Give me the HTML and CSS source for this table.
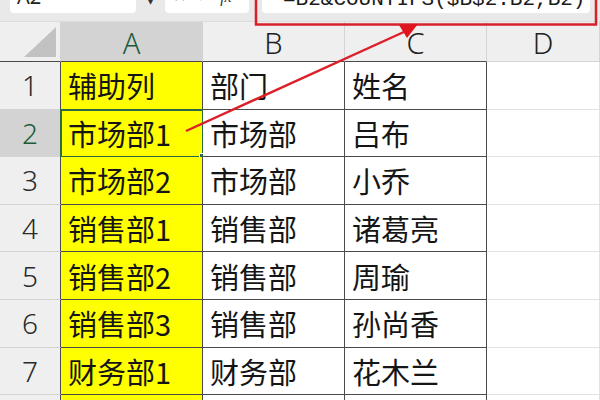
FILE: index.html
```html
<!DOCTYPE html>
<html>
<head>
<meta charset="utf-8">
<link rel="stylesheet" href="styles.css">
</head>
<body>
<div class="page">
  <div class="topbar">
    <div class="namebox"><span class="nb-text">A2</span></div>
    <div class="drop">▾</div>
    <div class="fxbox"><span class="fx-text">✕&nbsp;&nbsp;✓&nbsp;&nbsp;<i>fx</i></span></div>
    <div class="formula"><span class="f-text">=B2&amp;COUNTIFS($B$2:B2,B2)</span></div>
  </div>
  <div class="sheet">
    <div class="corner"><div class="tri"></div></div>
    <div class="colh sel">A</div>
    <div class="colh">B</div>
    <div class="colh">C</div>
    <div class="colh last">D</div>

    <div class="rowh">1</div>
    <div class="cell a">辅助列</div><div class="cell">部门</div><div class="cell">姓名</div><div class="cell d"></div>

    <div class="rowh sel">2</div>
    <div class="cell a active">市场部1<span class="handle"></span></div><div class="cell">市场部</div><div class="cell">吕布</div><div class="cell d"></div>

    <div class="rowh">3</div>
    <div class="cell a">市场部2</div><div class="cell">市场部</div><div class="cell">小乔</div><div class="cell d"></div>

    <div class="rowh">4</div>
    <div class="cell a">销售部1</div><div class="cell">销售部</div><div class="cell">诸葛亮</div><div class="cell d"></div>

    <div class="rowh">5</div>
    <div class="cell a">销售部2</div><div class="cell">销售部</div><div class="cell">周瑜</div><div class="cell d"></div>

    <div class="rowh">6</div>
    <div class="cell a">销售部3</div><div class="cell">销售部</div><div class="cell">孙尚香</div><div class="cell d"></div>

    <div class="rowh">7</div>
    <div class="cell a">财务部1</div><div class="cell">财务部</div><div class="cell">花木兰</div><div class="cell d"></div>

    <div class="rowh">8</div>
    <div class="cell a"></div><div class="cell"></div><div class="cell"></div><div class="cell d"></div>
  </div>
  <svg class="annot" width="600" height="400" viewBox="0 0 600 400">
    <rect x="256" y="-4" width="340" height="28.5" fill="none" stroke="#d6212b" stroke-width="2.5"/>
    <line x1="186" y1="131" x2="406" y2="31" stroke="#dd1f2a" stroke-width="2.4"/>
    <polygon points="418,24 399,25 407,38" fill="#e0141f"/>
  </svg>
</div>
</body>
</html>
```
FILE: styles.css
```css
html, body {
  margin: 0;
  padding: 0;
  background: #ffffff;
}
.page {
  position: relative;
  width: 600px;
  height: 400px;
  overflow: hidden;
  font-family: "Noto Sans", "Noto Sans CJK SC", sans-serif;
}
.topbar {
  height: 22px;
  background: #e9e9e9;
  display: flex;
  align-items: flex-start;
  border-bottom: 1px solid #dcdcdc;
  box-sizing: border-box;
}
.namebox {
  margin-left: 10px;
  width: 126px;
  height: 13px;
  background: #fff;
  border-radius: 0 0 4px 4px;
  overflow: hidden;
}
.nb-text {
  display: block;
  margin: -13px 0 0 7px;
  font-size: 20px;
  line-height: 20px;
  color: #222;
  font-family: "Noto Sans", sans-serif;
}
.drop {
  width: 29px;
  text-align: center;
  font-size: 14px;
  line-height: 6px;
  margin-top: -3px;
  color: #333;
}
.fxbox {
  width: 84px;
  height: 13px;
  background: #fff;
  border-radius: 0 0 4px 4px;
  overflow: hidden;
}
.fx-text {
  display: block;
  margin: -12px 0 0 8px;
  font-size: 16px;
  line-height: 18px;
  color: #888;
  font-family: "DejaVu Sans", sans-serif;
  white-space: nowrap;
}
.fx-text i {
  color: #333;
  font-family: "Liberation Serif", serif;
}
.formula {
  margin-left: 13px;
  width: 328px;
  height: 13px;
  background: #fff;
  border-radius: 0 0 4px 4px;
  overflow: hidden;
}
.f-text {
  display: block;
  margin: -11px 0 0 21px;
  font-size: 21px;
  line-height: 21px;
  color: #1a1a1a;
  font-family: "Liberation Mono", monospace;
  white-space: nowrap;
}
.sheet {
  display: grid;
  grid-template-columns: 61px 142px 142px 142px 1fr;
  grid-template-rows: 40px repeat(8, 47.6px);
}
.corner {
  background: #efefef;
  border-right: 1px solid #d4d4d4;
  border-bottom: 1px solid #4a4a4a;
  display: flex;
  align-items: flex-end;
  justify-content: flex-end;
  padding: 0 4px 4px 0;
}
.tri {
  width: 32px;
  height: 30px;
  background: #c2c2c2;
  clip-path: polygon(100% 0, 100% 100%, 0 100%);
}
.colh {
  background: #efefef;
  border-right: 1px solid #d4d4d4;
  border-bottom: 1px solid #4a4a4a;
  display: flex;
  align-items: center;
  justify-content: center;
  font-size: 29px;
  font-weight: 300;
  color: #222;
  padding-top: 2px;
}
.colh.last {
  border-bottom-color: #d4d4d4;
}
.colh.sel, .rowh.sel {
  background: #d3d3d3;
  color: #1d5b38;
}
.rowh {
  background: #efefef;
  border-right: 1px solid #4a4a4a;
  border-bottom: 1px solid #d4d4d4;
  display: flex;
  align-items: center;
  justify-content: center;
  font-size: 28px;
  font-weight: 300;
  color: #2a2a2a;
}
.cell {
  position: relative;
  background: #fff;
  border-right: 1px solid #4a4a4a;
  border-bottom: 1px solid #4a4a4a;
  display: flex;
  align-items: center;
  padding-left: 7px;
  font-family: "Noto Sans CJK SC", sans-serif;
  font-size: 29px;
  color: #151515;
  white-space: nowrap;
}
.cell.a {
  background: #ffff00;
}
.cell.d {
  border-right: 1px solid #e2e2e2;
  border-bottom: 1px solid #e2e2e2;
}
.cell.active {
  outline: 2px solid #2a6b46;
  outline-offset: -1px;
}
.handle {
  position: absolute;
  right: -4px;
  bottom: -4px;
  width: 5px;
  height: 5px;
  background: #2a6b46;
  border: 1px solid #fff;
}
.annot {
  position: absolute;
  left: 0;
  top: 0;
  pointer-events: none;
}
```
